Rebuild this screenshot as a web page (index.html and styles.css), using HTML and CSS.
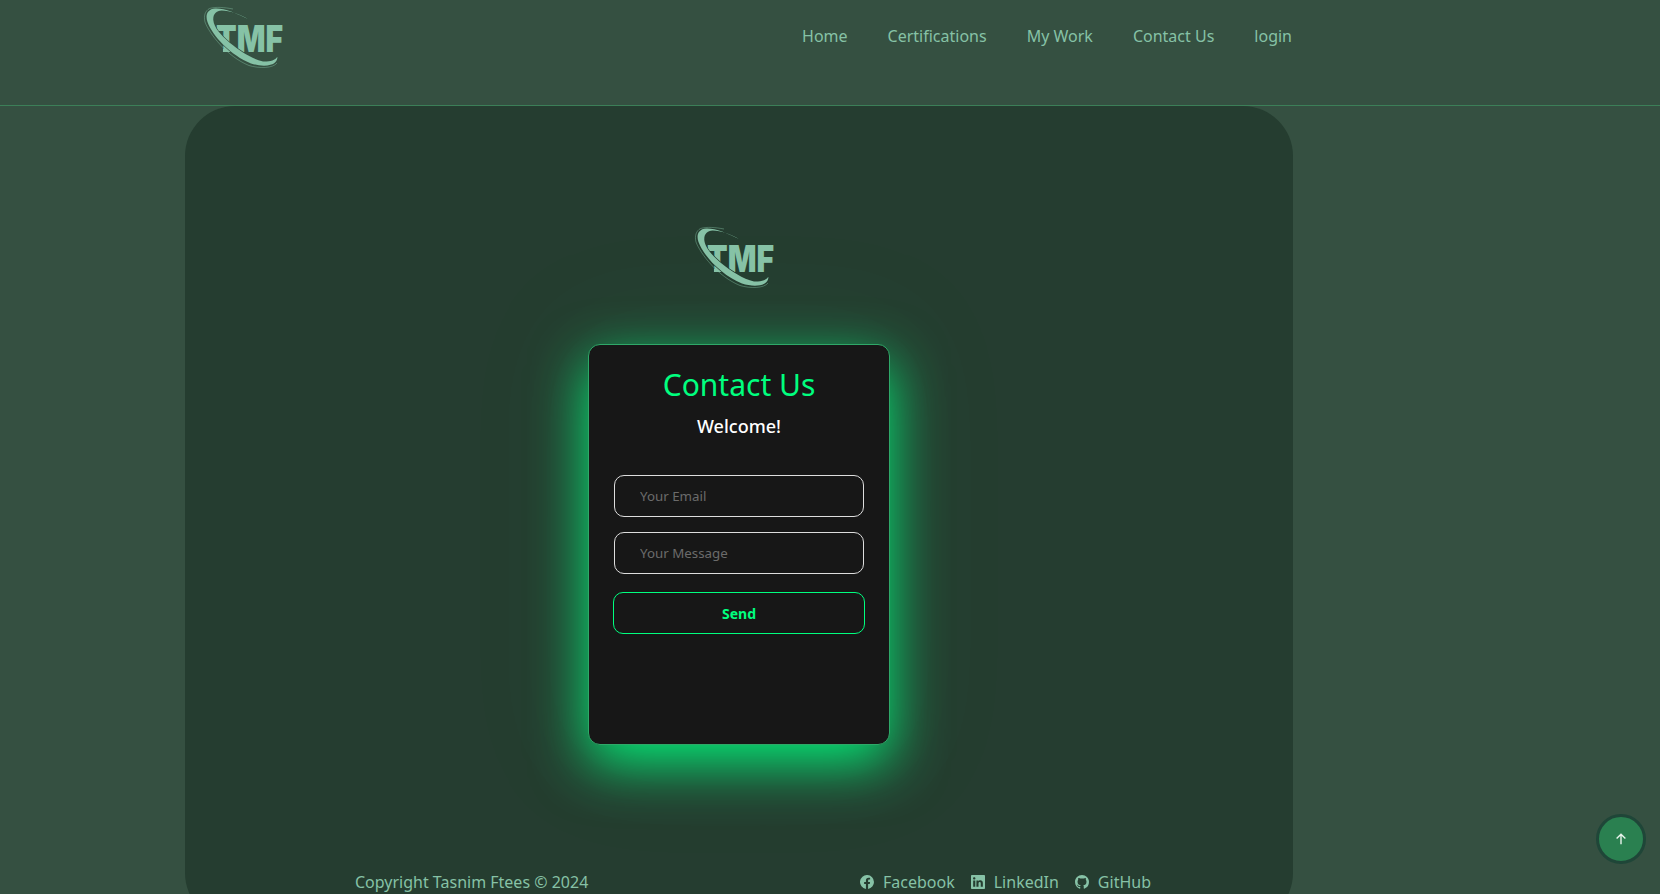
FILE: index.html
```html
<!DOCTYPE html>
<html lang="en">
<head>
    <meta charset="UTF-8">
    <meta name="viewport" content="width=device-width, initial-scale=1.0">
    <title>Contact Us</title>
    <link rel="stylesheet" href="styles.css">
</head>
<body>
    <header class="site-header">
        <div class="header-inner">
            <a class="logo logo-top" href="#">
                <svg viewBox="0 0 80 62" width="80" height="62">
                    <text class="logo-text" x="13" y="46" textLength="67" lengthAdjust="spacingAndGlyphs">TMF</text>
                    <rect class="logo-foot" x="20" y="43" width="17" height="3"/>
                    <path class="logo-swoosh" d="M45 13C33 7 21 2 12 2.500 4.500 3 2 9 4.500 16 9.500 30 28 49.500 48 57.500 57 60.500 68 60.500 72 56.500 74 54.500 74.500 53 74.300 50.700 72 54.500 67 55.700 60 55.500 49 53 37 45 27 37 18 29 11 22 10.300 14 10 8 13 5 18.700 4.500 27 4.500 37 8.500 45 13Z"/>
                    <path class="logo-line" d="M30 3C22 1.500 13 .5 6.500 2.500 2 5 .5 10 2 16 6.500 28 24 50.500 46 59.500 56 62.500 70 62.500 74 57"/>
                </svg>
            </a>
            <nav class="main-nav">
                <a href="#">Home</a>
                <a href="#">Certifications</a>
                <a href="#">My Work</a>
                <a href="#">Contact Us</a>
                <a href="#">login</a>
            </nav>
        </div>
    </header>

    <main class="panel">
        <a class="logo logo-form" href="#">
            <svg viewBox="0 0 80 62" width="80" height="62">
                <text class="logo-text" x="13" y="46" textLength="67" lengthAdjust="spacingAndGlyphs">TMF</text>
                <rect class="logo-foot" x="20" y="43" width="17" height="3"/>
                <path class="logo-swoosh" d="M45 13C33 7 21 2 12 2.500 4.500 3 2 9 4.500 16 9.500 30 28 49.500 48 57.500 57 60.500 68 60.500 72 56.500 74 54.500 74.500 53 74.300 50.700 72 54.500 67 55.700 60 55.500 49 53 37 45 27 37 18 29 11 22 10.300 14 10 8 13 5 18.700 4.500 27 4.500 37 8.500 45 13Z"/>
                <path class="logo-line" d="M30 3C22 1.500 13 .5 6.500 2.500 2 5 .5 10 2 16 6.500 28 24 50.500 46 59.500 56 62.500 70 62.500 74 57"/>
            </svg>
        </a>

        <section class="contact-card">
            <h1>Contact Us</h1>
            <h2>Welcome!</h2>
            <form class="contact-form">
                <input type="email" placeholder="Your Email">
                <input type="text" placeholder="Your Message">
                <button type="button">Send</button>
            </form>
        </section>

        <footer class="site-footer">
            <span>Copyright Tasnim Ftees © 2024</span>
            <div class="social">
                <a href="#">
                    <svg viewBox="0 0 16 16" width="14" height="14"><path d="M16 8a8 8 0 1 0-9.250 7.900v-5.590H4.720V8h2.030V6.240c0-2 1.190-3.110 3.020-3.110.87 0 1.790.16 1.790.16v1.970h-1.010c-.99 0-1.300.62-1.300 1.250V8h2.220l-.35 2.310H9.250v5.590A8 8 0 0 0 16 8z"/></svg>
                    Facebook
                </a>
                <a href="#">
                    <svg viewBox="0 0 16 16" width="14" height="14"><path d="M0 1.150C0 .51.530 0 1.180 0h13.640C15.470 0 16 .51 16 1.150v13.700c0 .64-.53 1.150-1.180 1.150H1.180C.53 16 0 15.490 0 14.850V1.150zM4.890 13.390V6.170h-2.400v7.220h2.400zM3.690 5.180c.84 0 1.360-.55 1.360-1.250-.02-.71-.52-1.250-1.340-1.250-.82 0-1.360.54-1.360 1.250 0 .7.520 1.250 1.330 1.250zM8.610 13.390V9.360c0-.22.020-.43.080-.59.170-.43.570-.88 1.230-.88.870 0 1.220.66 1.220 1.640v3.860h2.400V9.250c0-2.220-1.180-3.250-2.760-3.250-1.270 0-1.850.7-2.170 1.190v.03h-.02l.02-.03V6.170h-2.400c.03.680 0 7.220 0 7.220h2.400z"/></svg>
                    LinkedIn
                </a>
                <a href="#">
                    <svg viewBox="0 0 16 16" width="14" height="14"><path d="M8 0C3.580 0 0 3.580 0 8c0 3.540 2.290 6.530 5.470 7.590.4.070.55-.17.550-.38 0-.19-.01-.82-.01-1.490-2.010.37-2.530-.49-2.690-.94-.09-.23-.48-.94-.82-1.130-.28-.15-.68-.52-.01-.53.630-.01 1.080.58 1.230.82.720 1.210 1.870.87 2.330.66.070-.52.280-.87.510-1.070-1.780-.2-3.640-.89-3.640-3.950 0-.87.310-1.590.820-2.150-.08-.2-.36-1.020.08-2.120 0 0 .67-.21 2.200.82.640-.18 1.320-.27 2-.27s1.360.09 2 .27c1.530-1.040 2.200-.82 2.200-.82.44 1.100.16 1.920.08 2.120.51.560.82 1.270.82 2.150 0 3.070-1.870 3.750-3.650 3.950.29.250.54.730.54 1.480 0 1.070-.01 1.930-.01 2.200 0 .21.150.46.550.38A8.010 8.010 0 0 0 16 8c0-4.420-3.580-8-8-8z"/></svg>
                    GitHub
                </a>
            </div>
        </footer>
    </main>

    <a class="to-top" href="#">
        <svg viewBox="0 0 16 16" width="14" height="14"><path d="M8 14V2.500M3 7.500l5-5 5 5"/></svg>
    </a>
</body>
</html>
```

FILE: styles.css
```css
* {
    box-sizing: border-box;
}
html, body {
    height: 100%;
}
body {
    margin: 0;
    overflow: hidden;
    background-color: #355041;
    color: #86c2a6;
    font-family: "Noto Sans", sans-serif;
    font-size: 16px;
}
a {
    color: inherit;
    text-decoration: none;
}
.site-header {
    height: 106px;
    border-bottom: 1px solid #3c7f58;
}
.header-inner {
    width: 1108px;
    margin-left: 185px;
    padding: 0 1px 0 18px;
    display: flex;
    justify-content: space-between;
}
.logo {
    display: block;
    width: 80px;
    height: 62px;
}
.logo-top {
    margin-top: 6px;
    --logo-bg: #355041;
}
.logo-form {
    --logo-bg: #253d30;
    margin: 120px 0 0 509px;
}
.logo svg {
    display: block;
    overflow: visible;
}
.logo-text {
    fill: #86c2a6;
    font-family: "Inter", sans-serif;
    font-size: 37px;
    font-weight: 900;
}
.logo-foot {
    fill: #86c2a6;
}
.logo-swoosh {
    fill: #86c2a6;
    stroke: var(--logo-bg);
    stroke-width: 1.2;
    paint-order: stroke;
}
.logo-line {
    fill: none;
    stroke: #86c2a6;
    stroke-width: 0.6;
    opacity: 0.7;
}
.main-nav {
    display: flex;
    gap: 40px;
    padding-top: 25px;
}
.panel {
    width: 1108px;
    height: 817px;
    margin-left: 185px;
    background-color: #253d30;
    border-radius: 50px;
    display: flow-root;
}
.contact-card {
    width: 302px;
    height: 401px;
    margin: 56px auto 0;
    padding-top: 20px;
    background-color: #171717;
    border: 1px solid #2fa868;
    border-radius: 12px;
    text-align: center;
    box-shadow: 0 18px 55px rgba(0, 255, 127, 0.9), 0 0 120px 40px rgba(0, 255, 127, 0.03);
}
.contact-card h1 {
    margin: 0;
    color: #00ff7f;
    font-size: 30px;
    font-weight: 400;
    line-height: 40px;
}
.contact-card h2 {
    margin: 9px 0 0;
    color: #fff;
    font-size: 18px;
    font-weight: 500;
    line-height: 25px;
}
.contact-form {
    margin-top: 36px;
    display: flex;
    flex-direction: column;
    align-items: center;
}
.contact-form input {
    width: 250px;
    height: 42px;
    margin-bottom: 15px;
    padding: 0 25px;
    background: transparent;
    border: 1px solid #ddd;
    border-radius: 10px;
    color: #fff;
    font-family: inherit;
    font-size: 13.333px;
}
.contact-form input::placeholder {
    color: #6b6b6b;
}
.contact-form button {
    width: 252px;
    height: 42px;
    margin-top: 3px;
    background: transparent;
    border: 1px solid #00ff7f;
    border-radius: 10px;
    color: #00ff7f;
    font-family: inherit;
    font-size: 14px;
    font-weight: 700;
}
.site-footer {
    width: 796px;
    margin: 125px 0 0 170px;
    display: flex;
    justify-content: space-between;
    line-height: 24px;
}
.social {
    display: flex;
    gap: 16px;
}
.social a {
    display: flex;
    align-items: center;
    gap: 9px;
}
.social svg {
    fill: currentColor;
}
.to-top {
    position: fixed;
    right: 14px;
    bottom: 30px;
    width: 50px;
    height: 50px;
    border: 3px solid #1f4638;
    border-radius: 50%;
    background-color: #2a8050;
    display: flex;
    align-items: center;
    justify-content: center;
}
.to-top svg {
    fill: none;
    stroke: #e8f3ec;
    stroke-width: 1.6;
}
```
